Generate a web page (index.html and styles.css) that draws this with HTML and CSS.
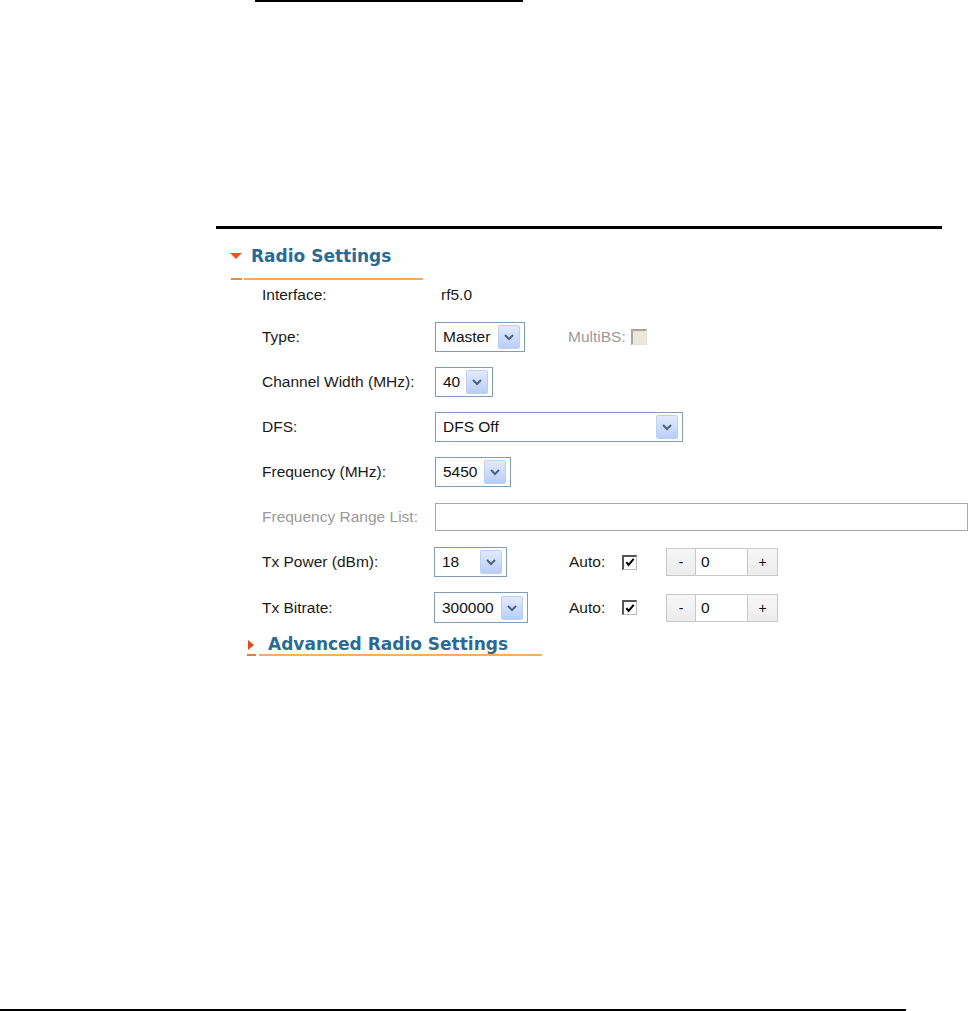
FILE: index.html
```html
<!DOCTYPE html>
<html>
<head>
<meta charset="utf-8">
<link rel="stylesheet" href="styles.css">
</head>
<body>
<div class="page">
  <div class="topline"></div>
  <div class="rule"></div>
  <div class="section">
    <div class="heading">
      <span class="tri-down"></span>
      <span class="heading-text">Radio Settings</span>
    </div>
    <div class="hl main-hl"><span class="seg1"></span><span class="seg2"></span></div>

    <div class="form">
      <div class="label first">Interface:</div>
      <div class="value first">rf5.0</div>
      <div class="extra first"></div>

      <div class="label">Type:</div>
      <div class="ctl"><div class="select w-master"><span class="sel-text">Master</span><span class="sel-btn"><svg viewBox="0 0 10 8" width="10" height="8"><path d="M1 2 L5 6 L9 2" fill="none" stroke="#4d6185" stroke-width="2"/></svg></span></div></div>
      <div class="extra"><span class="muted">MultiBS:</span><span class="cb disabled"></span></div>

      <div class="label">Channel Width (MHz):</div>
      <div class="ctl"><div class="select w-40"><span class="sel-text">40</span><span class="sel-btn"><svg viewBox="0 0 10 8" width="10" height="8"><path d="M1 2 L5 6 L9 2" fill="none" stroke="#4d6185" stroke-width="2"/></svg></span></div></div>
      <div class="extra"></div>

      <div class="label">DFS:</div>
      <div class="ctl span2"><div class="select w-dfs"><span class="sel-text">DFS Off</span><span class="sel-btn"><svg viewBox="0 0 10 8" width="10" height="8"><path d="M1 2 L5 6 L9 2" fill="none" stroke="#4d6185" stroke-width="2"/></svg></span></div></div>

      <div class="label">Frequency (MHz):</div>
      <div class="ctl"><div class="select w-freq"><span class="sel-text">5450</span><span class="sel-btn"><svg viewBox="0 0 10 8" width="10" height="8"><path d="M1 2 L5 6 L9 2" fill="none" stroke="#4d6185" stroke-width="2"/></svg></span></div></div>
      <div class="extra"></div>

      <div class="label muted">Frequency Range List:</div>
      <div class="ctl span2"><div class="textbox w-range"></div></div>

      <div class="label">Tx Power (dBm):</div>
      <div class="ctl"><div class="select w-pow"><span class="sel-text">18</span><span class="sel-btn"><svg viewBox="0 0 10 8" width="10" height="8"><path d="M1 2 L5 6 L9 2" fill="none" stroke="#4d6185" stroke-width="2"/></svg></span></div></div>
      <div class="extra">
        <span class="auto-label">Auto:</span>
        <span class="cb checked"><svg viewBox="0 0 13 13" width="13" height="13"><path d="M2.5 6 L5 9 L10.5 2.5" fill="none" stroke="#000" stroke-width="2.2"/></svg></span>
        <div class="stepper"><span class="step-btn">-</span><span class="step-input">0</span><span class="step-btn plus">+</span></div>
      </div>

      <div class="label">Tx Bitrate:</div>
      <div class="ctl"><div class="select w-rate"><span class="sel-text">300000</span><span class="sel-btn"><svg viewBox="0 0 10 8" width="10" height="8"><path d="M1 2 L5 6 L9 2" fill="none" stroke="#4d6185" stroke-width="2"/></svg></span></div></div>
      <div class="extra">
        <span class="auto-label">Auto:</span>
        <span class="cb checked"><svg viewBox="0 0 13 13" width="13" height="13"><path d="M2.5 6 L5 9 L10.5 2.5" fill="none" stroke="#000" stroke-width="2.2"/></svg></span>
        <div class="stepper"><span class="step-btn">-</span><span class="step-input">0</span><span class="step-btn plus">+</span></div>
      </div>
    </div>

    <div class="adv">
      <div class="heading adv-heading">
        <span class="tri-right"></span>
        <span class="heading-text">Advanced Radio Settings</span>
      </div>
      <div class="hl adv-hl"><span class="seg1"></span><span class="seg2"></span></div>
    </div>
  </div>
  <div class="bottomline"></div>
</div>
</body>
</html>
```

FILE: styles.css
```css
html, body {
  margin: 0;
  padding: 0;
  background: #fff;
}
body {
  font-family: "Liberation Sans", Arial, sans-serif;
  font-size: 15.5px;
  color: #1a1a1a;
  width: 980px;
  height: 1011px;
  overflow: hidden;
}
.page {
  position: relative;
  height: 1011px;
}
.topline {
  margin-left: 255px;
  width: 268px;
  height: 2px;
  background: #000;
}
.rule {
  margin: 224px 0 0 216px;
  width: 726px;
  height: 3px;
  background: #000;
}
.section {
  margin-left: 230px;
}
.heading {
  display: flex;
  align-items: center;
  height: 19px;
  margin-top: 18px;
}
.heading-text {
  font-family: "DejaVu Sans", Verdana, sans-serif;
  font-weight: bold;
  font-size: 17px;
  line-height: 19px;
  color: #2b6b93;
}
.tri-down {
  width: 0;
  height: 0;
  border-left: 6px solid transparent;
  border-right: 6px solid transparent;
  border-top: 6px solid #e6561f;
  margin-right: 9px;
  margin-top: -2px;
}
.hl {
  display: flex;
  height: 2px;
}
.main-hl {
  margin-top: 12px;
  width: 192px;
  margin-left: 1px;
}
.hl .seg1 {
  width: 11px;
  background: #ee8a3a;
}
.hl .seg2 {
  flex: 1;
  margin-left: 2px;
  background: #f8a959;
}

.form {
  display: grid;
  grid-template-columns: 173px 133px auto;
  grid-template-rows: 27px repeat(5, 30px) 30px 31px;
  row-gap: 15px;
  margin-left: 32px;
  width: 710px;
}
.form > div {
  display: flex;
  align-items: center;
}
.form .first {
  padding-top: 3px;
}
.value {
  padding-left: 6px;
}
.muted {
  color: #9a9a9a;
}
.span2 {
  grid-column: 2 / span 2;
}

.select {
  box-sizing: border-box;
  height: 30px;
  border: 1px solid #7f9db9;
  background: #fff;
  display: flex;
  align-items: center;
  padding: 2px 4px 2px 0;
}
.sel-text {
  flex: 1;
  padding-left: 7px;
  color: #111;
}
.sel-btn {
  box-sizing: border-box;
  width: 22px;
  height: 24px;
  border-radius: 2px;
  border: 1px solid #bccff4;
  background: linear-gradient(#e2ebfd, #b9cdf6);
  display: flex;
  align-items: center;
  justify-content: center;
}
.w-master { width: 90px; }
.w-40 { width: 58px; }
.w-dfs { width: 248px; }
.w-freq { width: 76px; }
.w-pow { width: 73px; margin-left: -1px; }
.w-rate { width: 94px; margin-left: -1px; height: 31px; }

.textbox {
  box-sizing: border-box;
  width: 533px;
  height: 28px;
  border: 1px solid #a9a9a9;
  background: #fff;
}

.extra .muted {
  margin-right: 5px;
}
.cb {
  box-sizing: border-box;
  width: 16px;
  height: 16px;
  display: inline-flex;
  align-items: center;
  justify-content: center;
}
.cb.disabled {
  background: #ebe8d8;
  border-top: 2px solid #a8a69c;
  border-left: 2px solid #a8a69c;
  border-bottom: 1px solid #e4e2d8;
  border-right: 1px solid #e4e2d8;
}
.cb.checked {
  width: 15px;
  height: 15px;
  background: #fff;
  border-top: 2px solid #555;
  border-left: 2px solid #555;
  border-bottom: 1px solid #bbb;
  border-right: 1px solid #bbb;
}
.auto-label {
  margin-left: 1px;
  width: 53px;
}
.stepper {
  display: flex;
  height: 28px;
  margin-left: 29px;
}
.step-btn {
  box-sizing: border-box;
  width: 30px;
  height: 28px;
  border: 1px solid #c8c8c8;
  background: linear-gradient(#f7f7f7, #ececec);
  display: flex;
  align-items: center;
  justify-content: center;
  font-size: 14px;
  color: #111;
}
.step-btn.plus {
  width: 31px;
}
.step-input {
  box-sizing: border-box;
  width: 51px;
  height: 28px;
  border: 1px solid #c8c8c8;
  border-left: none;
  border-right: none;
  background: #fff;
  padding-left: 5px;
  display: flex;
  align-items: center;
  color: #111;
}

.adv {
  margin-left: 17px;
  margin-top: 12px;
}
.adv-heading {
  margin-top: 0;
}
.tri-right {
  width: 0;
  height: 0;
  border-top: 5px solid transparent;
  border-bottom: 5px solid transparent;
  border-left: 6px solid #e2491c;
  margin-right: 14px;
  margin-left: 1px;
}
.adv-hl {
  width: 295px;
  margin-top: 0;
}
.adv-hl .seg1 {
  width: 9px;
  background: #ef7a2c;
}
.adv-hl .seg2 {
  margin-left: 3px;
  background: #f9ad62;
}

.bottomline {
  position: absolute;
  left: 0;
  top: 1009px;
  width: 906px;
  height: 2px;
  background: #000;
}
```
